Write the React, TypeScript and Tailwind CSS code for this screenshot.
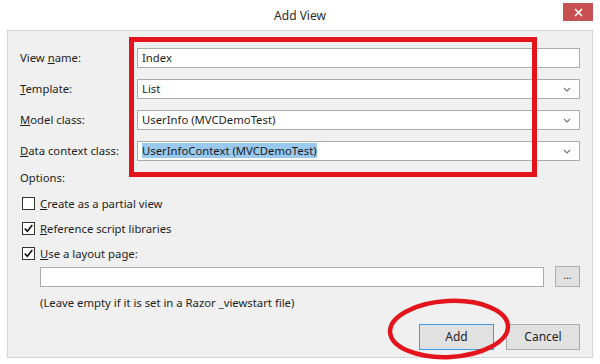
import React from "react";

const Chevron = () => (
  <svg width="8" height="5" viewBox="0 0 8 5" className="shrink-0">
    <path d="M1 1l3 3 3-3" fill="none" stroke="#777" strokeWidth="1.2" />
  </svg>
);

const Field = ({
  label,
  k,
  rest,
  value,
  combo,
  selected,
}: {
  label: string;
  k: string;
  rest: string;
  value: string;
  combo?: boolean;
  selected?: boolean;
}) => (
  <div className="flex items-center h-5">
    <div className="w-[117px] shrink-0 text-[#1e1e1e]">
      {label}
      <span className="underline">{k}</span>
      {rest}
    </div>
    <div className="flex-1 h-5 flex items-center bg-white border border-[#acacac] pl-[4px] pr-[8px]">
      <span className="flex-1">
        {selected ? <span className="bg-[#99c9ef] text-[#1a1a1a]">{value}</span> : value}
      </span>
      {combo && <Chevron />}
    </div>
  </div>
);

const Check = ({ checked, k, rest }: { checked: boolean; k: string; rest: string }) => (
  <div className="flex items-center h-[25px] pl-[2px]">
    <div className="w-[13px] h-[13px] border border-[#333] bg-white flex items-center justify-center mr-[5px]">
      {checked && (
        <svg width="11" height="11" viewBox="0 0 11 11">
          <path d="M1.8 5.6l2.6 2.6 4.9-6.2" fill="none" stroke="#111" strokeWidth="1.6" />
        </svg>
      )}
    </div>
    <span>
      <span className="underline">{k}</span>
      {rest}
    </span>
  </div>
);

export default function App() {
  return (
    <div
      className="relative w-[600px] h-[364px] bg-white overflow-hidden text-[11.3px] leading-4 text-[#1e1e1e]"
      style={{ fontFamily: '"Segoe UI", "Noto Sans", "Open Sans", sans-serif' }}
    >
      {/* title bar */}
      <div className="h-[30px] flex items-center justify-center relative">
        <span className="text-[12px] text-[#2b2b2b] mt-[2px]">Add View</span>
        <div className="absolute left-[563px] top-[3px] w-[30px] h-[18px] bg-[#c75050] flex items-center justify-center">
          <svg width="9" height="9" viewBox="0 0 9 9">
            <path d="M1 1l7 7M8 1L1 8" stroke="#fff" strokeWidth="1.6" />
          </svg>
        </div>
      </div>

      {/* body */}
      <div className="mx-[7px] h-[328px] bg-[#f0f0f0] border border-[#d4d4d4] pt-[17px] pl-[12px] pr-[12px] flex flex-col">
        <div className="flex flex-col gap-[11px]">
          <Field label="View " k="n" rest="ame:" value="Index" />
          <Field label="" k="T" rest="emplate:" value="List" combo />
          <Field label="" k="M" rest="odel class:" value="UserInfo (MVCDemoTest)" combo />
          <Field label="" k="D" rest="ata context class:" value="UserInfoContext (MVCDemoTest)" combo selected />
        </div>
        <div className="mt-[9px]">Options:</div>
        <div className="mt-[5px] flex flex-col">
          <Check checked={false} k="C" rest="reate as a partial view" />
          <Check checked k="R" rest="eference script libraries" />
          <Check checked k="U" rest="se a layout page:" />
        </div>
        <div className="flex items-center ml-[20px] gap-[11px]">
          <div className="flex-1 h-5 bg-white border border-[#acacac]" />
          <div className="w-[25px] h-[21px] bg-[#e1e1e1] border border-[#adadad] flex items-center justify-center text-[10px] leading-none pb-[3px]">
            ...
          </div>
        </div>
        <div className="ml-[20px] mt-[8px]">(Leave empty if it is set in a Razor _viewstart file)</div>
        <div className="flex justify-end gap-[12px] mt-[13px] text-[12px]">
          <div className="w-[75px] h-[26px] bg-[#e1e1e1] border border-[#3c9ce8] flex items-center justify-center">
            Add
          </div>
          <div className="w-[74px] h-[26px] bg-[#e1e1e1] border border-[#adadad] flex items-center justify-center">
            Cancel
          </div>
        </div>
      </div>

      {/* red annotation overlays */}
      <div className="absolute left-[129px] top-[37px] w-[408px] h-[140px] border-[5px] border-[#e3141c] pointer-events-none" />
      <svg className="absolute left-[386px] top-[297px] pointer-events-none" width="126" height="64" viewBox="0 0 126 64">
        <ellipse cx="63" cy="32" rx="59" ry="28" fill="none" stroke="#e3141c" strokeWidth="4.5" transform="rotate(-3 63 32)" />
      </svg>
    </div>
  );
}
